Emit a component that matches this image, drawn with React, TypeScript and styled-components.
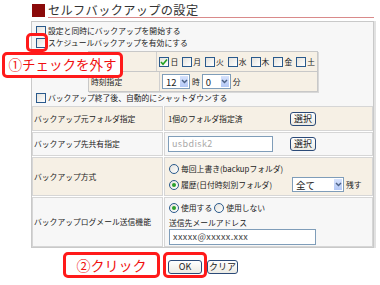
import styled, { createGlobalStyle } from 'styled-components';

const FONT = '"Noto Sans CJK JP", "Liberation Sans", sans-serif';

const GlobalStyle = createGlobalStyle`
  body {
    margin: 0;
    background: #ffffff;
    font-family: ${FONT};
    color: #222;
  }
`;

const Page = styled.div`
  position: relative;
  width: 380px;
  height: 285px;
  box-sizing: border-box;
  padding: 3px 6px 0 31px;
  font-size: 7.8px;
  line-height: 12px;
`;

const TitleBar = styled.div`
  display: flex;
  align-items: flex-end;
  height: 15px;
`;

const TitleMark = styled.div`
  width: 13px;
  height: 13px;
  margin: 0 3px 1px 1px;
  background: #8b0a0a;
`;

const TitleText = styled.div`
  flex: 1;
  font-size: 12.2px;
  line-height: 14px;
  letter-spacing: 0.35px;
  color: #333;
  border-bottom: 1px solid #d98a8a;
`;

const Panel = styled.div`
  margin-top: 3px;
  width: 343px;
  box-sizing: border-box;
  border: 1px solid #c9c9c9;
  background: #f7f7f7;
  box-shadow: 2px 0 0 #e2e2e2;
`;

const Options = styled.div`
  padding: 3px 0 0 4px;
`;

const CheckLine = styled.div`
  display: flex;
  align-items: center;
  gap: 2px;
  height: 12px;
  white-space: nowrap;
`;

const Box = styled.span`
  display: inline-flex;
  align-items: center;
  justify-content: center;
  width: 10px;
  height: 10px;
  box-sizing: border-box;
  border: 1px solid #2a5a8c;
  background: linear-gradient(135deg, #e4e2dc, #ffffff);
  flex: none;
`;

const Round = styled.span`
  display: inline-flex;
  align-items: center;
  justify-content: center;
  width: 10px;
  height: 10px;
  box-sizing: border-box;
  border: 1px solid #2a5a8c;
  border-radius: 50%;
  background: linear-gradient(135deg, #e4e2dc, #ffffff);
  flex: none;
`;

const Dot = styled.span`
  width: 4px;
  height: 4px;
  border-radius: 50%;
  background: #2aa02a;
`;

const Check = ({ on }: { on?: boolean }) => (
  <Box>
    {on && (
      <svg width="8" height="8" viewBox="0 0 8 8">
        <path d="M1 4 L3 6.2 L7 1.5" fill="none" stroke="#21a121" strokeWidth="1.6" />
      </svg>
    )}
  </Box>
);

const Radio = ({ on }: { on?: boolean }) => <Round>{on && <Dot />}</Round>;

const Schedule = styled.div`
  margin: 2px 0 0 52px;
  width: 230px;
  box-sizing: border-box;
  border: 1px solid #c8c8c8;
  box-shadow: 1px 1px 0 #d8d8d8;
  background: #f6f0e5;
`;

const SchedRow = styled.div<{ last?: boolean }>`
  display: flex;
  height: 19px;
  border-bottom: ${p => (p.last ? 'none' : '1px solid #c8c8c8')};
`;

const SchedLabel = styled.div`
  width: 68px;
  padding-left: 2px;
  display: flex;
  align-items: center;
  border-right: 1px solid #d0d0d0;
`;

const SchedValue = styled.div`
  display: flex;
  align-items: center;
  padding-left: 2px;
  gap: 2px;
`;

const Day = styled.span`
  display: inline-flex;
  align-items: center;
  gap: 1px;
  margin-right: 2px;
`;

const SelectBox = styled.div<{ w: number }>`
  display: inline-flex;
  align-items: center;
  justify-content: space-between;
  width: ${p => p.w}px;
  height: 15px;
  box-sizing: border-box;
  border: 1px solid #7f9db9;
  background: #fff;
  padding-left: 3px;
  font-size: 9.5px;
  flex: none;
`;

const DropBtn = styled.span`
  display: inline-flex;
  align-items: center;
  justify-content: center;
  width: 10px;
  height: 100%;
  box-sizing: border-box;
  border: 1px solid #fff;
  background: linear-gradient(#d6e2fc, #b4c8f6);
`;

const Select = ({ w, value }: { w: number; value: string }) => (
  <SelectBox w={w}>
    {value}
    <DropBtn>
      <svg width="7" height="5" viewBox="0 0 7 5">
        <path d="M1 1 L3.5 3.6 L6 1" fill="none" stroke="#4d6185" strokeWidth="1.4" />
      </svg>
    </DropBtn>
  </SelectBox>
);

const Table = styled.div`
  margin-top: 2px;
  display: grid;
  grid-template-columns: 131px 1fr;
  grid-template-rows: 25px 24px 39px 50px;
  gap: 1px;
  background: #ffffff;
`;

const Cell = styled.div<{ alt?: boolean }>`
  box-sizing: border-box;
  border: 1px solid #d6d6d6;
  background: ${p => (p.alt ? '#f7f7f7' : '#f6f0e5')};
  display: flex;
  align-items: center;
  white-space: nowrap;
`;

const LabelCell = styled(Cell)`
  padding-left: 1px;
`;

const ValueCell = styled(Cell)`
  padding-left: 3px;
`;

const ValueStack = styled(Cell)`
  flex-direction: column;
  align-items: flex-start;
  justify-content: center;
  padding-left: 4px;
`;

const Slot = styled.div<{ w: number }>`
  width: ${p => p.w}px;
  flex: none;
  display: flex;
  align-items: center;
  gap: 2px;
`;

const SmallBtn = styled.button`
  height: 14px;
  padding: 0 3px;
  box-sizing: border-box;
  border: 1px solid #2b4a78;
  border-radius: 3px;
  background: linear-gradient(#ffffff, #ecebe4);
  font-family: ${FONT};
  font-size: 9px;
  line-height: 12px;
  color: #222;
  white-space: nowrap;
`;

const TextInput = styled.div<{ w: number; dim?: boolean }>`
  width: ${p => p.w}px;
  height: 16px;
  box-sizing: border-box;
  border: 1px solid #7f9db9;
  background: #fff;
  padding-left: 3px;
  display: flex;
  align-items: center;
  font-size: 9px;
  color: ${p => (p.dim ? '#a8a8a8' : '#444')};
  letter-spacing: 0.4px;
`;

const RadioLine = styled.div`
  display: flex;
  align-items: center;
  gap: 2px;
  height: 16px;
`;

const MailLabel = styled.div`
  height: 13px;
  line-height: 13px;
`;

const Footer = styled.div`
  display: flex;
  gap: 5px;
  margin-top: 12px;
  padding-left: 137px;
`;

const FootBtn = styled(SmallBtn)<{ w: number }>`
  width: ${p => p.w}px;
  padding: 0;
`;

const Callout = styled.div<{ x: number; y: number; w: number; h: number; fill?: boolean; fs?: number }>`
  position: absolute;
  left: ${p => p.x}px;
  top: ${p => p.y}px;
  width: ${p => p.w}px;
  height: ${p => p.h}px;
  box-sizing: border-box;
  border: 3px solid #ff1a1a;
  border-radius: 5px;
  background: ${p => (p.fill ? '#ffffff' : 'transparent')};
  color: #f01010;
  font-size: ${p => p.fs ?? 14}px;
  line-height: 1;
  display: flex;
  align-items: center;
  justify-content: center;
  white-space: nowrap;
`;

export default function App() {
  const days = ['日', '月', '火', '水', '木', '金', '土'];
  return (
    <>
      <GlobalStyle />
      <Page>
        <TitleBar>
          <TitleMark />
          <TitleText>セルフバックアップの設定</TitleText>
        </TitleBar>
        <Panel>
          <Options>
            <CheckLine><Check />設定と同時にバックアップを開始する</CheckLine>
            <CheckLine><Check />スケジュールバックアップを有効にする</CheckLine>
            <Schedule>
              <SchedRow>
                <SchedLabel />
                <SchedValue>
                  {days.map((d, i) => (
                    <Day key={d}><Check on={i === 0} />{d}</Day>
                  ))}
                </SchedValue>
              </SchedRow>
              <SchedRow last>
                <SchedLabel>時刻指定</SchedLabel>
                <SchedValue>
                  <Select w={28} value="12" />
                  時
                  <Select w={29} value="0" />
                  分
                </SchedValue>
              </SchedRow>
            </Schedule>
            <CheckLine><Check />バックアップ終了後、自動的にシャットダウンする</CheckLine>
          </Options>
          <Table>
            <LabelCell>バックアップ元フォルダ指定</LabelCell>
            <ValueCell>
              <Slot w={122}>1個のフォルダ指定済</Slot>
              <SmallBtn>選択</SmallBtn>
            </ValueCell>
            <LabelCell alt>バックアップ先共有指定</LabelCell>
            <ValueCell alt>
              <Slot w={122}><TextInput w={105} dim>usbdisk2</TextInput></Slot>
              <SmallBtn>選択</SmallBtn>
            </ValueCell>
            <LabelCell>バックアップ方式</LabelCell>
            <ValueStack>
              <RadioLine><Radio />毎回上書き(backupフォルダ)</RadioLine>
              <RadioLine>
                <Slot w={121}><Radio on />履歴(日付時刻別フォルダ)</Slot>
                <Select w={52} value="全て" />
                残す
              </RadioLine>
            </ValueStack>
            <LabelCell alt>バックアップログメール送信機能</LabelCell>
            <ValueStack alt>
              <RadioLine><Radio on />使用する<Radio />使用しない</RadioLine>
              <MailLabel>送信先メールアドレス</MailLabel>
              <TextInput w={147}>xxxxx@xxxxx.xxx</TextInput>
            </ValueStack>
          </Table>
        </Panel>
        <Footer>
          <FootBtn w={34}>OK</FootBtn>
          <FootBtn w={31}>クリア</FootBtn>
        </Footer>
        <Callout x={26} y={33} w={22} h={19} />
        <Callout x={2} y={52} w={121} h={26} fill fs={13.5}>①チェックを外す</Callout>
        <Callout x={63} y={252} w={97} h={26} fill fs={14}>②クリック</Callout>
        <Callout x={163} y={252} w={44} h={26} />
      </Page>
    </>
  );
}
